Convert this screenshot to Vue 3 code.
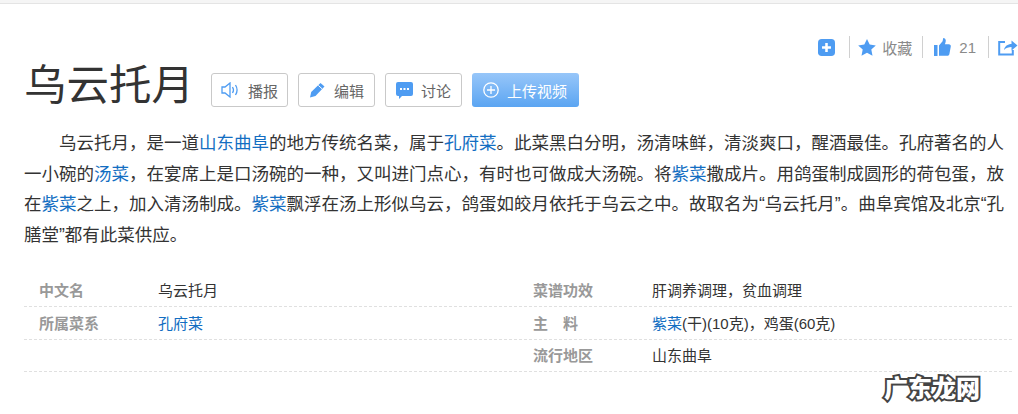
<script setup>
const rows = [
  { left: { label: '中文名', value: '乌云托月' }, right: { label: '菜谱功效', value: '肝调养调理，贫血调理' } },
  { left: { label: '所属菜系', link: '孔府菜' }, right: { label: '主　料', link: '紫菜', value: '(干)(10克)，鸡蛋(60克)' } },
  { left: {}, right: { label: '流行地区', value: '山东曲阜' } },
]
</script>

<template>
  <div class="page">
    <div class="topbar"></div>
    <div class="actions">
      <svg class="ic-add" width="17" height="17" viewBox="0 0 16 16">
        <rect x="0" y="0" width="16" height="16" rx="3.5" fill="#4e9cf2" />
        <path d="M8 3.8v8.4M3.8 8h8.4" stroke="#fff" stroke-width="2.4" />
      </svg>
      <span class="sep"></span>
      <svg width="18" height="17" viewBox="0 0 18 17">
        <path d="M9 0l2.7 5.6 6.1.8-4.5 4.2 1.2 6.1L9 13.700l-5.500 3 1.200-6.100L.2 6.400l6.100-.8z" fill="#4e9cf2" />
      </svg>
      <span class="act-text">收藏</span>
      <span class="sep"></span>
      <svg class="ic-thumb" width="17" height="18" viewBox="0 0 17 18">
        <rect x="0" y="7" width="3.500" height="11" fill="#4e9cf2" />
        <path d="M5 7.500l3.600-4.200.6-3.300c1.600 0 2.600 1.200 2.600 2.800 0 1.300-.5 2.400-.9 3.400h3.900c1.400 0 2.200 1 2 2.200l-1.400 7.500c-.2 1-1 1.800-2 1.800H5z" fill="#4e9cf2" />
      </svg>
      <span class="act-text act-num">21</span>
      <span class="sep"></span>
      <svg class="ic-share" width="20" height="17" viewBox="0 0 20 17">
        <path d="M7 3H1.200v12.500h13.600V11" fill="none" stroke="#4e9cf2" stroke-width="2" />
        <path d="M6 11c.6-3.800 3.800-6 7.500-6V1.500l6 5-6 5V8c-2.800 0-5.500.8-7.500 3z" fill="#4e9cf2" />
      </svg>
    </div>

    <div class="title-row">
      <h1 class="title">乌云托月</h1>
      <div class="buttons">
        <a class="btn">
          <svg class="ic-speaker" width="19" height="16" viewBox="0 0 19 16">
            <path d="M1 5h3l5-4v14l-5-4H1z" fill="none" stroke="#4e9cf2" stroke-width="1.300" />
            <path d="M11.500 5c1.200 1.800 1.200 4.200 0 6M14.500 3c1.900 3 1.900 7 0 10" fill="none" stroke="#4e9cf2" stroke-width="1.300" />
          </svg>
          <span>播报</span>
        </a>
        <a class="btn">
          <svg width="17" height="16" viewBox="0 0 17 16">
            <path d="M11.500 1l4 3.500-9 9.500-5.500 1.500 1.200-5.500z" fill="#4e9cf2" />
            <path d="M9.300 3.400l4 3.600" stroke="#fff" stroke-width="1" />
          </svg>
          <span>编辑</span>
        </a>
        <a class="btn">
          <svg width="17" height="17" viewBox="0 0 17 17">
            <path d="M2 0h13a2 2 0 0 1 2 2v10a2 2 0 0 1-2 2H6l-3 3v-3H2a2 2 0 0 1-2-2V2a2 2 0 0 1 2-2z" fill="#4e9cf2" />
            <path d="M4 7h2M7.500 7h2M11 7h2" stroke="#fff" stroke-width="2" />
          </svg>
          <span>讨论</span>
        </a>
        <a class="btn btn-upload">
          <svg width="16" height="16" viewBox="0 0 16 16">
            <circle cx="8" cy="8" r="7.200" fill="none" stroke="#fff" stroke-width="1.300" />
            <path d="M8 4v8M4 8h8" stroke="#fff" stroke-width="1.300" />
          </svg>
          <span>上传视频</span>
        </a>
      </div>
    </div>

    <p class="summary">
      乌云托月，是一道<a>山东曲阜</a>的地方传统名菜，属于<a>孔府菜</a>。此菜黑白分明，汤清味鲜，清淡爽口，醒酒最佳。孔府著名的人一小碗的<a>汤菜</a>，在宴席上是口汤碗的一种，又叫进门点心，有时也可做成大汤碗。将<a>紫菜</a>撒成片。用鸽蛋制成圆形的荷包蛋，放在<a>紫菜</a>之上，加入清汤制成。<a>紫菜</a>飘浮在汤上形似乌云，鸽蛋如皎月依托于乌云之中。故取名为“乌云托月”。曲阜宾馆及北京“孔膳堂”都有此菜供应。
    </p>

    <div class="info">
      <div v-for="(row, i) in rows" :key="i" class="info-row">
        <div v-for="side in ['left', 'right']" :key="side" class="info-cell">
          <span class="info-label">{{ row[side].label }}</span>
          <span class="info-value"><a v-if="row[side].link">{{ row[side].link }}</a>{{ row[side].value }}</span>
        </div>
      </div>
    </div>

    <div class="watermark">广东龙网</div>
  </div>
</template>

<style scoped>
.page {
  position: relative;
  width: 1018px;
  height: 414px;
  overflow: hidden;
  background: #fff;
  color: #333;
  font-family: "Liberation Sans", "Noto Sans CJK SC", sans-serif;
}
.topbar {
  height: 3px;
  background: #f5f5f5;
  border-bottom: 1px solid #e4e4e4;
}
.actions {
  display: flex;
  align-items: center;
  justify-content: flex-end;
  height: 22px;
  margin-top: 32px;
  color: #8a8a8a;
  font-size: 15px;
}
.ic-add {
  margin-right: 14px;
}
.sep {
  width: 1px;
  height: 22px;
  margin-right: 8px;
  background: #d0d0d0;
}
.act-text {
  margin-left: 6px;
  margin-right: 10px;
}
.ic-thumb {
  margin-left: 3px;
}
.act-num {
  margin-left: 8px;
  margin-right: 12px;
}
.ic-share {
  margin-left: 1px;
}
.title-row {
  display: flex;
  align-items: flex-start;
  margin-top: 3px;
  padding-left: 24px;
}
.title {
  margin: 0;
  font-size: 42.500px;
  font-weight: 400;
  line-height: 50px;
  color: #333;
}
.buttons {
  display: flex;
  gap: 10px;
  margin-left: 17px;
  margin-top: 12px;
}
.btn {
  display: flex;
  align-items: center;
  gap: 8px;
  box-sizing: border-box;
  width: 77px;
  height: 34px;
  padding-left: 10px;
  border: 1px solid #c9c9c9;
  border-radius: 3px;
  font-size: 15px;
  color: #666;
}
.ic-speaker {
  margin-left: -1px;
}
.btn-upload {
  width: 107px;
  padding-left: 11px;
  border: 0;
  color: #fff;
  background: linear-gradient(#97c6f9, #5ba5f2);
}
.summary {
  width: 980px;
  margin: 17px 0 0 24px;
  font-size: 17.500px;
  line-height: 30.500px;
  text-indent: 2em;
  color: #333;
}
.summary a,
.info a {
  color: #136ec2;
}
.info {
  margin: 24px 6px 0 24px;
}
.info-row {
  display: flex;
  height: 33px;
  border-bottom: 1px dashed #e0e0e0;
  box-sizing: border-box;
}
.info-row:last-child {
  height: 32px;
}
.info-cell {
  display: flex;
  align-items: center;
  width: 494px;
  padding-left: 15px;
  padding-bottom: 2px;
  box-sizing: border-box;
  font-size: 15px;
}
.info-label {
  width: 119px;
  font-weight: 700;
  color: #999;
}
.info-value {
  color: #333;
}
.watermark {
  position: absolute;
  left: 884px;
  top: 369px;
  font-size: 24px;
  font-weight: 900;
  color: #fff;
  -webkit-text-stroke: 4px #444;
  paint-order: stroke fill;
}
</style>
